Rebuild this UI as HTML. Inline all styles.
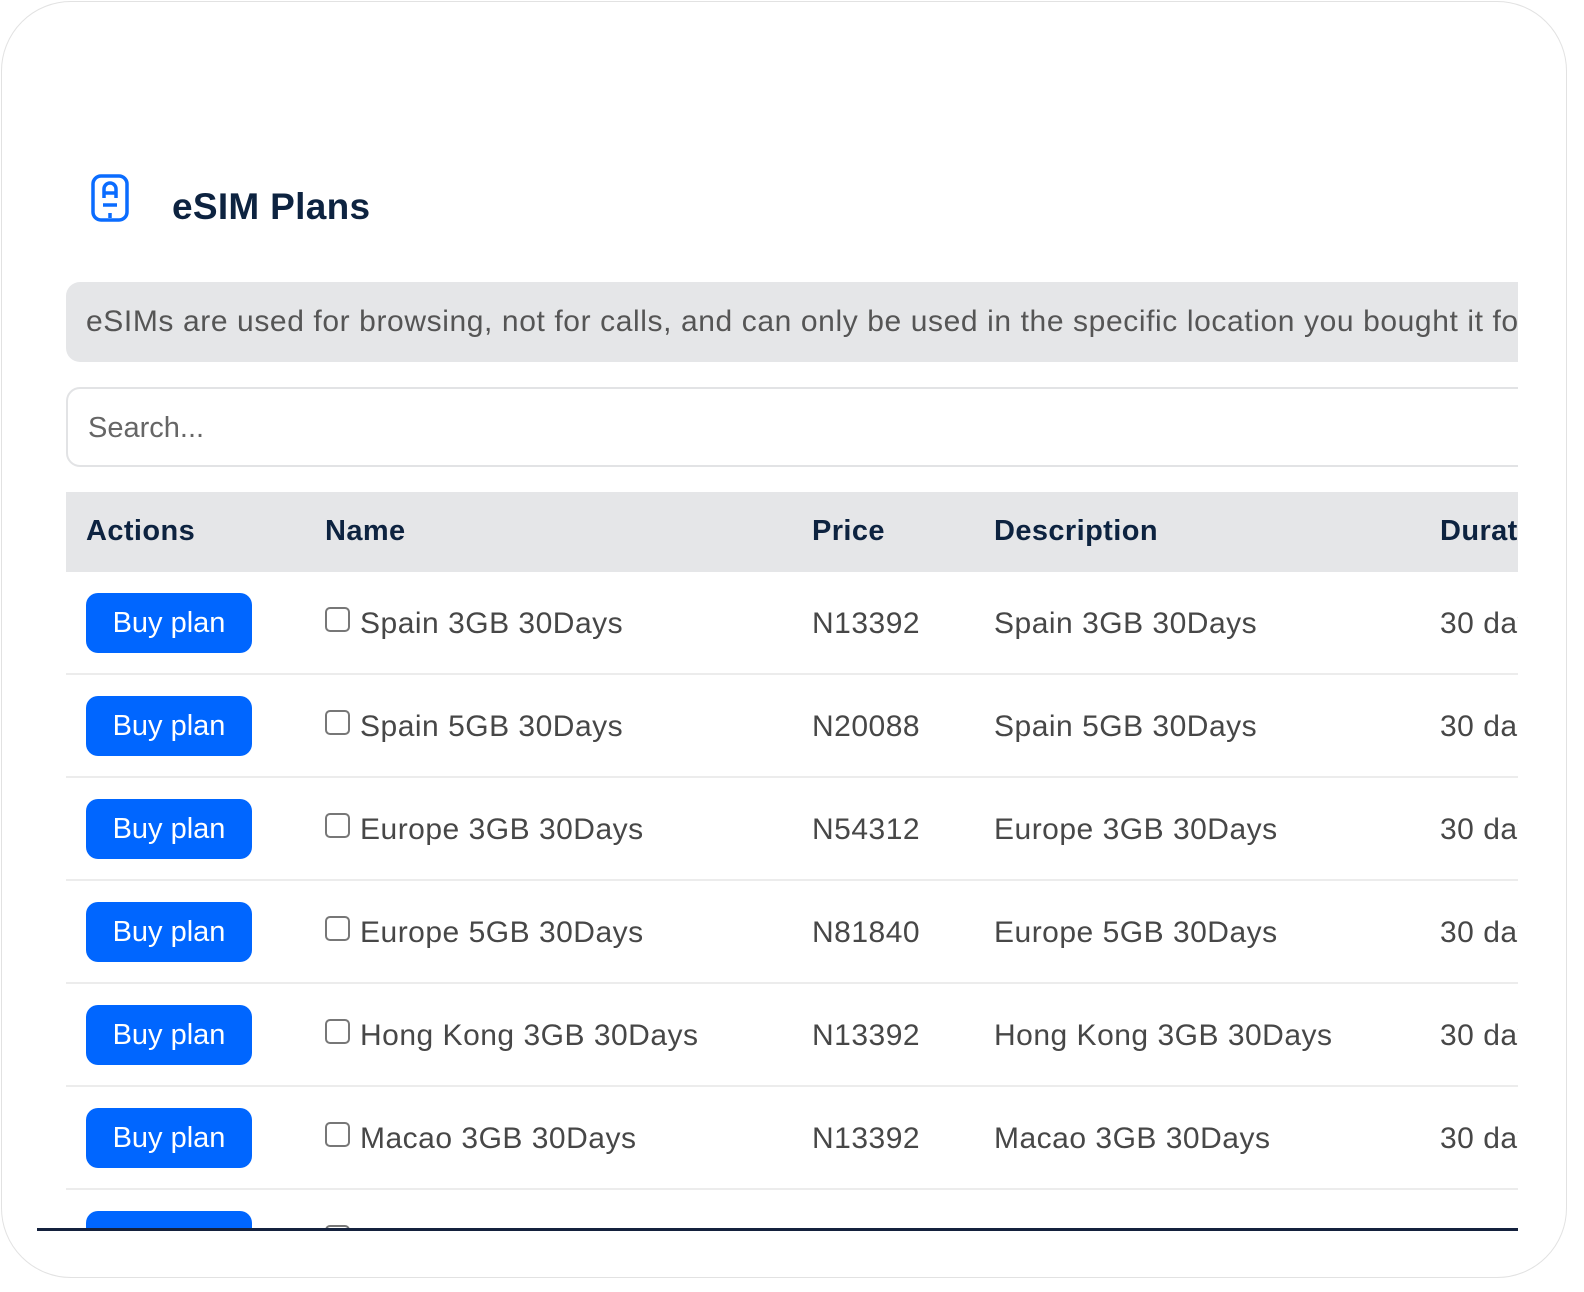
<!DOCTYPE html>
<html><head><style>
*{margin:0;padding:0;box-sizing:border-box}
body{width:1584px;height:1292px;background:#fff;font-family:"Liberation Sans",sans-serif;position:relative;overflow:hidden}
.frame{position:absolute;left:1px;top:1px;width:1566px;height:1277px;border:1px solid #e2e2e2;border-radius:70px;background:#fff}
.clip{position:absolute;left:0;top:0;width:1518px;height:1230px;overflow:hidden}
.title{position:absolute;left:172px;top:186px;font-size:37px;font-weight:bold;color:#0d2340;letter-spacing:0.3px}
.icon{position:absolute;left:91px;top:174px}
.note{position:absolute;left:66px;top:282px;width:1600px;height:80px;background:#e5e6e8;border-radius:14px;color:#555;font-size:30px;line-height:80px;padding-left:20px;white-space:nowrap;letter-spacing:0.6px}
.search{position:absolute;left:66px;top:387px;width:1600px;height:80px;border:2px solid #e2e3e5;border-radius:14px;color:#666;font-size:29px;line-height:78px;padding-left:20px}
.thead{position:absolute;left:66px;top:492px;width:1600px;height:80px;background:#e5e6e8}
.th{position:absolute;top:0;line-height:78px;font-weight:bold;font-size:29px;color:#0d2340;white-space:nowrap;letter-spacing:0.4px}
.row{position:absolute;left:66px;width:1600px;height:103px;border-bottom:2px solid #ececec}
.btn{position:absolute;left:20px;top:21px;width:166px;height:60px;background:#0066ff;border-radius:12px;color:#fff;font-size:29px;line-height:60px;text-align:center}
.td{position:absolute;top:2px;line-height:100px;font-size:30px;color:#474747;white-space:nowrap;letter-spacing:0.5px}
.cb{display:inline-block;width:25px;height:25px;border:2px solid #777;border-radius:5px;vertical-align:top;margin-top:33px;margin-right:10px}
.line{position:absolute;left:37px;top:1228px;width:1481px;height:3px;background:#14213d}
</style></head><body>
<div class="frame"></div>
<div class="clip">
<svg class="icon" width="40" height="48" viewBox="0 0 40 48"><rect x="2" y="2" width="34" height="44" rx="8" fill="none" stroke="#0a6cff" stroke-width="3.5"/><path d="M13 24V15a6 6 0 0 1 12 0v9M13 19h12M12 31h14M19 44v-5" fill="none" stroke="#0a6cff" stroke-width="3.5"/></svg>
<div class="title">eSIM Plans</div>
<div class="note">eSIMs are used for browsing, not for calls, and can only be used in the specific location you bought it for.</div>
<div class="search">Search...</div>
<div class="thead">
<div class="th" style="left:20px">Actions</div>
<div class="th" style="left:259px">Name</div>
<div class="th" style="left:746px">Price</div>
<div class="th" style="left:928px">Description</div>
<div class="th" style="left:1374px">Duration</div>
</div>
<div class="row" style="top:572px"><div class="btn">Buy plan</div><div class="td" style="left:259px"><span class="cb"></span>Spain 3GB 30Days</div><div class="td" style="left:746px">N13392</div><div class="td" style="left:928px">Spain 3GB 30Days</div><div class="td" style="left:1374px">30 days</div></div>
<div class="row" style="top:675px"><div class="btn">Buy plan</div><div class="td" style="left:259px"><span class="cb"></span>Spain 5GB 30Days</div><div class="td" style="left:746px">N20088</div><div class="td" style="left:928px">Spain 5GB 30Days</div><div class="td" style="left:1374px">30 days</div></div>
<div class="row" style="top:778px"><div class="btn">Buy plan</div><div class="td" style="left:259px"><span class="cb"></span>Europe 3GB 30Days</div><div class="td" style="left:746px">N54312</div><div class="td" style="left:928px">Europe 3GB 30Days</div><div class="td" style="left:1374px">30 days</div></div>
<div class="row" style="top:881px"><div class="btn">Buy plan</div><div class="td" style="left:259px"><span class="cb"></span>Europe 5GB 30Days</div><div class="td" style="left:746px">N81840</div><div class="td" style="left:928px">Europe 5GB 30Days</div><div class="td" style="left:1374px">30 days</div></div>
<div class="row" style="top:984px"><div class="btn">Buy plan</div><div class="td" style="left:259px"><span class="cb"></span>Hong Kong 3GB 30Days</div><div class="td" style="left:746px">N13392</div><div class="td" style="left:928px">Hong Kong 3GB 30Days</div><div class="td" style="left:1374px">30 days</div></div>
<div class="row" style="top:1087px"><div class="btn">Buy plan</div><div class="td" style="left:259px"><span class="cb"></span>Macao 3GB 30Days</div><div class="td" style="left:746px">N13392</div><div class="td" style="left:928px">Macao 3GB 30Days</div><div class="td" style="left:1374px">30 days</div></div>
<div class="row" style="top:1190px"><div class="btn">Buy plan</div><div class="td" style="left:259px"><span class="cb"></span>Macao 5GB 30Days</div></div>
</div>
<div class="line"></div>
</body></html>
